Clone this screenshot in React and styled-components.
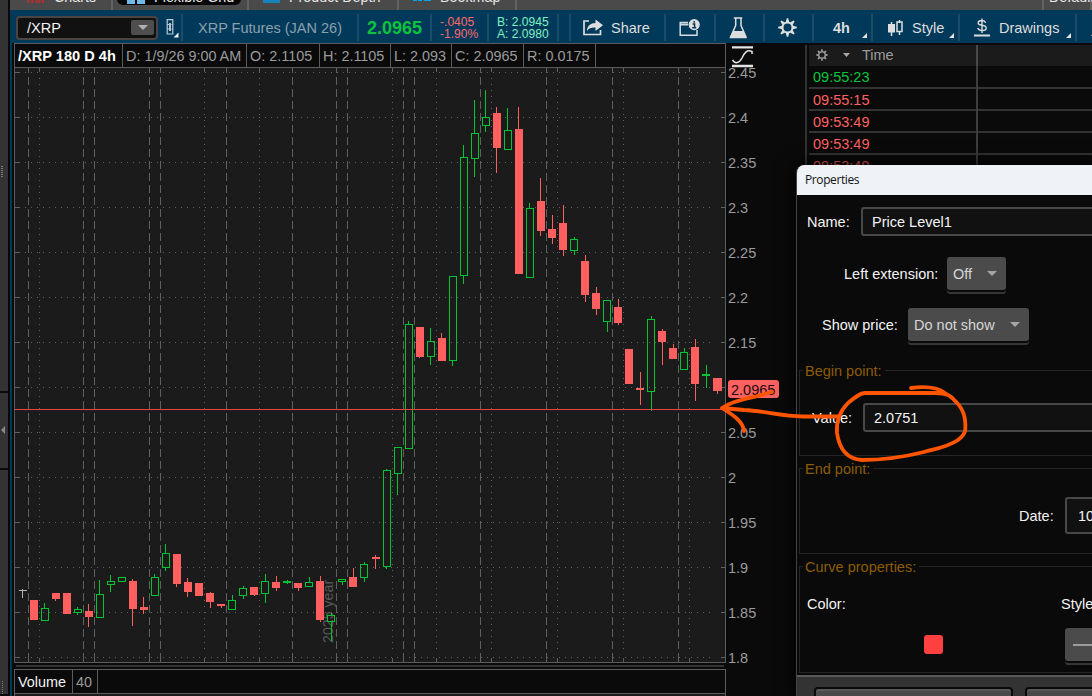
import React from "react";
import styled, { createGlobalStyle } from "styled-components";

const GlobalStyle = createGlobalStyle`
  body {
    margin: 0;
    background: #0a0a0a;
    font-family: "Liberation Sans", Arial, sans-serif;
    font-size: 14.5px;
    color: #9b9b9b;
    overflow: hidden;
  }
  * {
    box-sizing: border-box;
  }
`
const Page = styled.div`
  position: relative;
  display: flex;
  width: 1092px;
  height: 696px;
  overflow: hidden;
  white-space: nowrap;
`
const Rail = styled.div`
  display: flex;
  flex-direction: column;
  width: 10px;
  border-right: 2px solid #090909;
  background: #333;
`
const RailPart = styled.div`
  display: flex;
  align-items: ${props => props.$align || "center"};
  height: ${props => props.$height}px;
  padding-bottom: ${props => props.$bottom || 0}px;
  border-bottom: 2px solid #0a0a0a;
`
const Main = styled.div`
  display: flex;
  flex-direction: column;
  flex: 1;
  min-width: 0;
`

/* top tabs */
const TabBar = styled.div`
  display: flex;
  height: 10px;
  background: #4a4a4a;
  overflow: hidden;
`
const Tab = styled.div`
  display: flex;
  flex-shrink: 0;
  width: ${props => props.$width}px;
  height: 30px;
  margin-top: -20px;
  padding-left: ${props => props.$pad}px;
  border-right: 2px solid #626262;
  font-size: 14.3px;
  line-height: 34px;
  color: #e6e6e6;
  svg {
    margin: 8px ${props => props.$gap || 9}px 0 0;
    flex-shrink: 0;
  }
`
const ActiveTab = styled(Tab)`
  padding: 0 4px;
  & > div {
    display: flex;
    width: 124px;
    height: 25px;
    padding-left: 10px;
    border-radius: 6px;
    background: #060606;
  }
`

/* toolbar */
const Toolbar = styled.div`
  display: flex;
  height: 33px;
  padding: 4px 0 2px 2px;
  background: #01395a;
`
const Cell = styled.div`
  position: relative;
  display: flex;
  align-items: center;
  flex-shrink: 0;
  width: ${props => props.$width}px;
  padding-left: ${props => props.$pad || 0}px;
  border-right: 2px solid #1b4c6a;
  color: ${props => props.$color || "#dedede"};
  gap: 8px;
  line-height: 12px;
  svg {
    flex-shrink: 0;
  }
`
const SymbolBox = styled.div`
  display: flex;
  align-items: center;
  justify-content: space-between;
  width: 142px;
  height: 24px;
  padding: 0 2px 0 9px;
  border: 2px solid #4a4542;
  border-radius: 4px;
  background: #111;
  color: #f2f2f2;
`
const DropButton = styled.div`
  display: flex;
  align-items: center;
  justify-content: center;
  width: 23px;
  height: 15px;
  margin-bottom: 1px;
  border-radius: 2px;
  background: #4e4e4e;
`
const LinkIcon = styled.svg`
  margin-top: 1px;
`
const LastPrice = styled.b`
  font-size: 18px;
  color: #0cc43c;
`
const Stack = styled.div`
  font-size: 12.1px;
  line-height: 12px;
`
const Corner = styled.span`
  position: absolute;
  right: 4px;
  bottom: 3px;
  border-left: 5px solid transparent;
  border-bottom: 5px solid #e4e4e4;
`

/* chart */
const Workspace = styled.div`
  display: flex;
  flex: 1;
  min-height: 0;
  border-left: 2px solid #01395a;
  padding-left: 2px;
  background: #0a0a0a;
`
const ChartPanel = styled.div`
  width: 712px;
  flex-shrink: 0;
`
const InfoBar = styled.div`
  display: flex;
  height: 25px;
  border: 1px solid #5c5c5c;
  line-height: 24px;
`
const Info = styled.div`
  width: ${props => props.$width}px;
  padding-left: 3px;
  flex-shrink: 0;
  border-right: 1px solid #5c5c5c;
  font-size: ${props => props.$bold ? 14.6 : 14.4}px;
  color: ${props => props.$color || "#9b9b9b"};
  font-weight: ${props => props.$bold ? "bold" : "normal"};
`
const Plot = styled.svg`
  display: block;
`
const Splitter = styled.div`
  height: 2px;
  margin: 2px 2px 2px;
  background: #333;
`
const VolumePlot = styled.div`
  height: 3px;
  border: solid #5c5c5c;
  border-width: 0 1px;
  background: #1b1b1b;
`
const Axis = styled.div`
  width: 79px;
  flex-shrink: 0;
  padding-left: 2px;
`
const StudyIcon = styled.svg`
  display: block;
  margin-left: 3px;
`
const AxisLabel = styled.div`
  height: 45px;
  line-height: 10px;
`
const PriceTag = styled.div`
  width: 51px;
  height: 18px;
  margin-top: -3px;
  margin-bottom: 30px;
  padding-left: 3px;
  border-radius: 3px;
  background: #ff6060;
  color: #1a0d0d;
  line-height: 20px;
`

/* time and sales */
const Sales = styled.div`
  flex: 1;
  margin-top: 2px;
  padding-left: 2px;
  border-left: 2px solid #333;
`
const SalesHeader = styled.div`
  display: flex;
  align-items: center;
  height: 21px;
  background: #1b1b1b;
`
const HeadCell = styled.div`
  display: flex;
  align-items: center;
  width: 169px;
  height: 21px;
  padding: 0 0 2px 7px;
  border-right: 2px solid #494949;
  svg + svg {
    margin: 0 12px 0 15px;
  }
`
const SalesRow = styled.div`
  height: ${props => props.$first ? 23 : 22}px;
  border-bottom: 2px solid #333;
`
const TimeCell = styled.div`
  width: 169px;
  height: 23px;
  padding-left: 4px;
  border-right: 2px solid #3d3d3d;
  line-height: 22px;
  color: ${props => props.$up ? "#0cc43c" : "#ff6060"};
`

/* properties window */
const Dialog = styled.div`
  position: absolute;
  left: 796px;
  top: 165px;
  width: 296px;
  height: 531px;
  overflow: hidden;
  border-left: 1px solid #444;
  border-top-left-radius: 8px;
  background: #0a0a0a;
  box-shadow: 0 0 20px #000;
  color: #f4f4f4;
`
const TitleBar = styled.div`
  height: 30px;
  padding-left: 8px;
  background: #eff3f7;
  color: #111;
  font: 12px/29px "Open Sans", "Noto Sans", sans-serif;
  letter-spacing: -0.4px;
`
const Field = styled.div`
  display: flex;
  align-items: center;
  height: ${props => props.$height}px;
  margin-top: ${props => props.$top || 0}px;
  padding-left: ${props => props.$pad}px;
`
const Label = styled.span`
  width: ${props => props.$width}px;
  flex-shrink: 0;
`
const Input = styled.div`
  flex: 1;
  height: 100%;
  padding-left: ${props => props.$pad || 9}px;
  border: 2px solid #484848;
  border-right: 0;
  border-radius: 3px 0 0 3px;
  background: #111;
  line-height: ${props => props.$line || 26}px;
  overflow: hidden;
`
const Select = styled.div`
  display: flex;
  align-items: center;
  justify-content: space-between;
  width: ${props => props.$width}px;
  flex-shrink: 0;
  height: 33px;
  padding: 0 9px 0 6px;
  border-radius: 3px;
  background: #4b4b4b;
  color: #d6d6d6;
  box-shadow: 0 2px 0 #0a0a0a, 0 4px 0 #363636;
`
const Group = styled.div`
  position: relative;
  height: ${props => props.$height}px;
  margin: ${props => props.$top}px 0 0 2px;
  border: 1px solid #252525;
  border-right: 0;
`
const Legend = styled.div`
  width: max-content;
  height: 17px;
  margin: -9px 0 0 3px;
  padding: 0 3px 0 2px;
  background: #0a0a0a;
  color: #8c5c05;
  line-height: 19px;
`
const Swatch = styled.div`
  width: 19px;
  height: 19px;
  border-radius: 3px;
  background: #ff4040;
`
const Footer = styled.div`
  display: flex;
  gap: 12px;
  height: 21px;
  margin-top: 2px;
  padding: 10px 0 0 17px;
  border-top: 2px solid #5a5a5a;
  background: #333;
`
const FooterButton = styled.div`
  width: 199px;
  flex-shrink: 0;
  height: 30px;
  border: 2px solid #0a0a0a;
  border-radius: 4px;
  background: #4a4a4a;
  box-shadow: inset 0 2px 0 #595959;
`
const Ink = styled.svg`
  position: absolute;
  left: 700px;
  top: 370px;
  pointer-events: none;
`

const UP = "#03c332";
const DOWN = "#ff5f5f";

// [up, high, body top, body bottom, low] in screen units
const candles = [
  [0, 600, 600, 620, 620],
  [1, 603, 608, 621, 621],
  [0, 593, 593, 599, 601],
  [0, 593, 593, 614, 614],
  [1, 607, 609, 613, 615],
  [0, 604, 611, 617, 627],
  [1, 580, 594, 618, 618],
  [1, 575, 581, 585, 592],
  [1, 577, 577, 582, 582],
  [0, 579, 581, 609, 626],
  [0, 597, 607, 610, 614],
  [1, 574, 577, 596, 596],
  [1, 544, 553, 568, 571],
  [0, 554, 554, 584, 587],
  [0, 578, 582, 592, 597],
  [0, 583, 583, 596, 596],
  [0, 592, 593, 602, 608],
  [0, 604, 604, 606, 608],
  [1, 595, 600, 610, 610],
  [1, 586, 588, 596, 599],
  [0, 587, 587, 595, 596],
  [1, 574, 581, 594, 603],
  [0, 576, 582, 588, 591],
  [1, 580, 581, 583, 584],
  [0, 583, 583, 588, 591],
  [1, 577, 582, 587, 587],
  [0, 576, 581, 620, 622],
  [1, 613, 615, 622, 641],
  [1, 579, 579, 582, 585],
  [0, 568, 577, 587, 587],
  [1, 562, 564, 578, 582],
  [0, 555, 557, 559, 569],
  [1, 469, 470, 567, 569],
  [1, 447, 447, 474, 495],
  [1, 321, 324, 449, 449],
  [0, 327, 327, 357, 358],
  [1, 328, 341, 357, 365],
  [0, 333, 338, 361, 361],
  [1, 276, 276, 361, 366],
  [1, 145, 157, 276, 284],
  [1, 100, 133, 159, 177],
  [1, 90, 117, 126, 132],
  [0, 107, 113, 148, 173],
  [1, 108, 130, 150, 150],
  [0, 107, 129, 274, 274],
  [1, 203, 208, 278, 278],
  [0, 178, 201, 231, 236],
  [0, 215, 229, 238, 244],
  [0, 205, 223, 250, 256],
  [1, 237, 239, 251, 255],
  [0, 255, 261, 295, 302],
  [0, 287, 293, 309, 315],
  [1, 300, 300, 322, 332],
  [0, 299, 307, 323, 325],
  [0, 349, 349, 384, 384],
  [0, 372, 388, 390, 405],
  [1, 316, 319, 392, 411],
  [0, 329, 331, 342, 365],
  [0, 344, 348, 359, 359],
  [1, 348, 352, 370, 370],
  [0, 339, 347, 384, 401],
  [1, 365, 374, 376, 388],
  [0, 378, 378, 391, 394],
];
const dashed = [28, 83, 94, 149, 160, 226, 292, 336, 347, 403, 414, 480, 546, 612, 678];
const dotted = [39, 204, 259, 392, 436, 491, 557, 623, 689];
const prices = ["2.45", "2.4", "2.35", "2.3", "2.25", "2.2", "2.15", null, "2.05", "2", "1.95", "1.9", "1.85", "1.8"];

function Candle({ index, data }) {
  const [up, high, top, bottom, low] = data;
  const x = Math.floor(30.01 + 11.032 * index);
  const cx = Math.floor(33.497 + 11.032 * index);
  const width = index === candles.length - 1 ? 9 : 8;
  if (up && bottom - top > 2) {
    return (
      <g fill={UP}>
        <rect x={cx} y={high} width="1" height={top - high} />
        <rect x={cx} y={bottom} width="1" height={low - bottom} />
        <rect x={x + 0.5} y={top + 0.5} width={width - 1} height={bottom - top - 1} fill="none" stroke={UP} />
      </g>
    )
  }
  return (
    <g fill={up ? UP : DOWN}>
      <rect x={cx} y={high} width="1" height={low - high} />
      <rect x={x} y={top} width={width} height={bottom - top} />
    </g>
  )
}

function PriceChart() {
  return (
    <Plot width="712" height="595" viewBox="14 68 712 595" shapeRendering="crispEdges">
      <rect x="14" y="68" width="712" height="595" fill="#1b1b1b" />
      <g stroke="#606060">
        {prices.map((p, i) => {
          const y = 72.5 + i * 45;
          return (
            <g key={i}>
              <path d={`M15 ${y}h5M721 ${y}h5`} />
              <path d={`M25 ${y}H711`} strokeDasharray="1 5" />
            </g>
          )
        })}
        {dashed.map(x => (
          <g key={x}>
            <path d={`M${x + 0.5} 68v5M${x + 0.5} 658v4`} />
            <path d={`M${x + 0.5} 77V662`} strokeDasharray="8 4" />
          </g>
        ))}
        {dotted.map(x => (
          <g key={x}>
            <path d={`M${x + 0.5} 68v4M${x + 0.5} 658v4`} />
            <path d={`M${x + 0.5} 78V654`} strokeDasharray="1 5" />
          </g>
        ))}
      </g>
      <text transform="translate(333 643) rotate(-90)" fill="#585858" fontSize="14.2">2025 year</text>
      <path d="M19 590.5h8M22.5 589v9" stroke="#b4b4b4" />
      {candles.map((c, i) => <Candle key={i} index={i} data={c} />)}
      <path d="M15 409.5H725" stroke="#e84343" />
      <path d="M14.5 68V662.5H725.5V68" fill="none" stroke="#5c5c5c" />
    </Plot>
  )
}

function Gear({ size, color }) {
  const angles = [0, 45, 90, 135, 180, 225, 270, 315];
  return (
    <svg width={size} height={size} viewBox="-10 -10 20 20">
      <circle r="5.3" fill="none" stroke={color} strokeWidth="2.2" />
      {angles.map(a => (
        <path key={a} d="M-1.9 -5.6L-.8 -9.8H.8L1.900 -5.6z" fill={color} transform={`rotate(${a})`} />
      ))}
    </svg>
  )
}

function Arrow({ color = "#a6a6a6", width = 10, height = 5 }) {
  return (
    <svg width={width} height={height} viewBox="0 0 10 5" preserveAspectRatio="none">
      <path d="M0 0H10L5 5z" fill={color} />
    </svg>
  )
}

function Tabs() {
  return (
    <TabBar>
      <Tab $width={103} $pad={17} $gap={10}>
        <svg width="17" height="15"><path d="M1.5 3v12M5.5 1v14M9.5 5v10M12.5 3v12M16 2v13" stroke="#b92c2c" strokeWidth="2" /></svg>
        Charts
      </Tab>
      <ActiveTab $width={136}>
        <div>
          <svg width="18" height="16"><path d="M0 0h8v7H0zM10 0h8v7h-8zM0 9h8v7H0zM10 9h8v7h-8z" fill="#73b9e8" /></svg>
          Flexible Grid
        </div>
      </ActiveTab>
      <Tab $width={150} $pad={14}>
        <svg width="17" height="15"><path d="M1.5 1v12.5h14V1" fill="none" stroke="#1683bd" strokeWidth="3" /></svg>
        Product Depth
      </Tab>
      <Tab $width={118} $pad={14}>
        <svg width="18" height="14"><path d="M0 5h4v8H0zM5 8h4v5H5zM11 3h7v10h-7z" fill="#00a5ee" /></svg>
        Bookmap
      </Tab>
      <Tab $width={527} $pad={0} />
      <Tab $width={48} $pad={5}>Default</Tab>
    </TabBar>
  )
}

function TopToolbar() {
  return (
    <Toolbar>
      <Cell $width={171} $pad={4}>
        <SymbolBox>
          /XRP
          <DropButton><Arrow color="#b0b0b0" /></DropButton>
        </SymbolBox>
        <LinkIcon width="13" height="20" viewBox="0 0 13 20">
          <path d="M3 6.500H1.200V1.700H6.800V6.500H5.500M3 11H1.200V16H6.800V11H5.500M1.200 6V11.500M6.800 6V11.500" fill="none" stroke="#b9cad5" strokeWidth="1.200" />
          <path d="M4 5V13" stroke="#f2f2f2" strokeWidth="1.500" />
          <path d="M12.500 14.500V19.500H7.500z" fill="#f2f2f2" />
        </LinkIcon>
      </Cell>
      <Cell $width={176} $pad={15} $color="#8ba0ad">XRP Futures (JAN 26)</Cell>
      <Cell $width={73} $pad={8}><LastPrice>2.0965</LastPrice></Cell>
      <Cell $width={57} $pad={8} $color="#ff6868">
        <Stack>-.0405<br />-1.90%</Stack>
      </Cell>
      <Cell $width={70} $pad={8} $color="#7ff0c0">
        <Stack>B: 2.0945<br />A: 2.0980</Stack>
      </Cell>
      <Cell $width={12} />
      <Cell $width={95} $pad={12}>
        <svg width="20" height="17" viewBox="0 0 20 17">
          <path d="M6 2H1V15.5H17.5V11" fill="none" stroke="#dedede" strokeWidth="1.7" />
          <path d="M4 12C4 7 7.5 4 12.5 4V0.5L20 6.2L12.5 12V8.5C8.5 8.3 6 9 4 12z" fill="#dedede" />
        </svg>
        Share
      </Cell>
      <Cell $width={50} $pad={13}>
        <svg width="21" height="18" viewBox="0 0 21 18">
          <path d="M9 3.5H1.2V16.3H18V11" fill="none" stroke="#d4dbe0" strokeWidth="1.5" />
          <path d="M1 5.5H9" stroke="#d4dbe0" strokeWidth="2" />
          <circle cx="15.2" cy="5.6" r="5.6" fill="#dedede" />
          <path d="M15.2 2v1.8M13.6 5h2v3.6M13.2 8.8h4" fill="none" stroke="#01395a" strokeWidth="1.5" />
        </svg>
      </Cell>
      <Cell $width={49} $pad={13}>
        <svg width="19" height="22" viewBox="0 0 19 22">
          <path d="M4.8 1H13.2M6.7 1.5V8.5L1.6 20H17L12 8.5V1.5" fill="none" stroke="#dedede" strokeWidth="1.5" />
          <path d="M4.5 14H14.2L17.8 21.3H.8z" fill="#dedede" />
        </svg>
      </Cell>
      <Cell $width={49} $pad={13}><Gear size={19} color="#dedede" /></Cell>
      <Cell $width={59} $pad={19}><b>4h</b><Corner /></Cell>
      <Cell $width={87} $pad={15}>
        <svg width="16" height="18" viewBox="0 0 16 18">
          <path d="M3.5 3V17" stroke="#dedede" strokeWidth="1.5" />
          <rect x="0" y="5" width="7" height="8.5" fill="#dedede" />
          <path d="M11.5 1V4M11.5 12V16" stroke="#dedede" strokeWidth="1.5" />
          <rect x="9" y="3" width="5" height="9.5" fill="none" stroke="#dedede" strokeWidth="1.5" />
        </svg>
        Style
        <Corner />
      </Cell>
      <Cell $width={117} $pad={13}>
        <svg width="18" height="19" viewBox="0 0 18 19">
          <path d="M1 17.5H17" stroke="#dedede" strokeWidth="2" />
          <path d="M12.7 4.7C12 3 10.7 2.5 9 2.5C6.8 2.5 5.2 3.4 5.2 5C5.2 8.5 13.2 6 13.2 10C13.2 11.7 11.5 12.6 9.2 12.6C7 12.6 5.4 11.8 4.7 10M9 .5V15" fill="none" stroke="#dedede" strokeWidth="1.4" />
        </svg>
        Drawings
        <Corner />
      </Cell>
      <Cell $width={30} $pad={14}>
        <svg width="6" height="17"><path d="M0 17L5 10V17z" fill="#dedede" /></svg>
      </Cell>
    </Toolbar>
  )
}

function PropertiesWindow() {
  return (
    <Dialog>
      <TitleBar>Properties</TitleBar>
      <Field $top={12} $height={29} $pad={10}>
        <Label $width={54}>Name:</Label>
        <Input>Price Level1</Input>
      </Field>
      <Field $top={21} $height={33} $pad={47}>
        <Label $width={103}>Left extension:</Label>
        <Select $width={59}>Off <Arrow /></Select>
      </Field>
      <Field $top={18} $height={33} $pad={25}>
        <Label $width={86}>Show price:</Label>
        <Select $width={121}>Do not show <Arrow /></Select>
      </Field>
      <Group $top={29} $height={86}>
        <Legend>Begin point:</Legend>
        <Field $top={24} $height={29} $pad={12}>
          <Label $width={51}>Value:</Label>
          <Input>2.0751</Input>
        </Field>
      </Group>
      <Group $top={12} $height={86}>
        <Legend>End point:</Legend>
        <Field $top={20} $height={37} $pad={219}>
          <Label $width={46}>Date:</Label>
          <Input $line={34} $pad={11}>10</Input>
        </Field>
      </Group>
      <Group $top={12} $height={107}>
        <Legend>Curve properties:</Legend>
        <Field $top={20} $height={18} $pad={7}>
          <Label $width={254}>Color:</Label>
          <Label $width={40}>Style:</Label>
        </Field>
        <Field $top={15} $height={33} $pad={124}>
          <Label $width={141}><Swatch /></Label>
          <Select $width={60}>
            <svg width="60" height="2"><path d="M2 1H60" stroke="#eee" /></svg>
          </Select>
        </Field>
      </Group>
      <Footer>
        <FooterButton />
        <FooterButton />
      </Footer>
    </Dialog>
  )
}

export default function App() {
  const times = ["09:55:23", "09:55:15", "09:53:49", "09:53:49", "09:53:49"];
  return (
    <Page>
      <GlobalStyle />
      <Rail>
        <RailPart $height={393} $align="flex-end" $bottom={213}>
          <svg width="4" height="12"><path d="M1.5 0v12M2.5 0v12" stroke="#777" strokeDasharray="1 1" /></svg>
        </RailPart>
        <RailPart $height={77} $bottom={2}>
          <svg width="6" height="8"><path d="M5 0V8L1 4z" fill="#888" /></svg>
        </RailPart>
        <RailPart $height={226} $align="flex-end">
          <svg width="4" height="13"><path d="M2.5 0v13" stroke="#777" strokeDasharray="1 1" /></svg>
        </RailPart>
      </Rail>
      <Main>
        <Tabs />
        <TopToolbar />
        <Workspace>
          <ChartPanel>
            <InfoBar>
              <Info $width={108} $bold $color="#fff">/XRP 180 D 4h</Info>
              <Info $width={124}>D: 1/9/26 9:00 AM</Info>
              <Info $width={73}>O: 2.1105</Info>
              <Info $width={71}>H: 2.1105</Info>
              <Info $width={61}>L: 2.093</Info>
              <Info $width={72}>C: 2.0965</Info>
              <Info $width={72}>R: 0.0175</Info>
            </InfoBar>
            <PriceChart />
            <Splitter />
            <InfoBar>
              <Info $width={58} $color="#f2f2f2">Volume</Info>
              <Info $width={25}>40</Info>
            </InfoBar>
            <VolumePlot />
          </ChartPanel>
          <Axis>
            <StudyIcon width="24" height="25" viewBox="0 0 24 25">
              <path d="M1 4.3H22M1 23H22" stroke="#e4e4e4" strokeWidth="2.3" />
              <path d="M1.5 17C4 21 8 20.500 11 15C13.500 10 16 6 21 8.500V11" fill="none" stroke="#e4e4e4" strokeWidth="1.5" />
            </StudyIcon>
            {prices.map((p, i) => p
              ? <AxisLabel key={i}>{p}</AxisLabel>
              : <PriceTag key={i}>2.0965</PriceTag>
            )}
          </Axis>
          <Sales>
            <SalesHeader>
              <HeadCell>
                <Gear size={12} color="#9b9b9b" />
                <Arrow width={7} height={4} />
                Time
              </HeadCell>
            </SalesHeader>
            {times.map((t, i) => (
              <SalesRow key={i} $first={i === 0}>
                <TimeCell $up={i === 0}>{t}</TimeCell>
              </SalesRow>
            ))}
          </Sales>
        </Workspace>
      </Main>
      <PropertiesWindow />
      <Ink width="280" height="100" viewBox="700 370 280 100" fill="none" stroke="#ff5500" strokeWidth="3.8" strokeLinecap="round" strokeLinejoin="round">
        <path d="M911 388C926 386 937 387 945 393C958 401 964 411 965 420C966 430 966 434 958 440C948 447 935 449 924 452C900 458 880 460 862 460C846 459 839 447 837 433C836 420 840 411 848 403C855 397 860 393 865 393H935C947 393 952 396 956 402" />
        <path d="M838 416.5H803C780 416 765 411 744 410L722 408C733 401 744 399 754 397L772 392M722 408C733 415 743 421 744 431" />
      </Ink>
    </Page>
  )
}
